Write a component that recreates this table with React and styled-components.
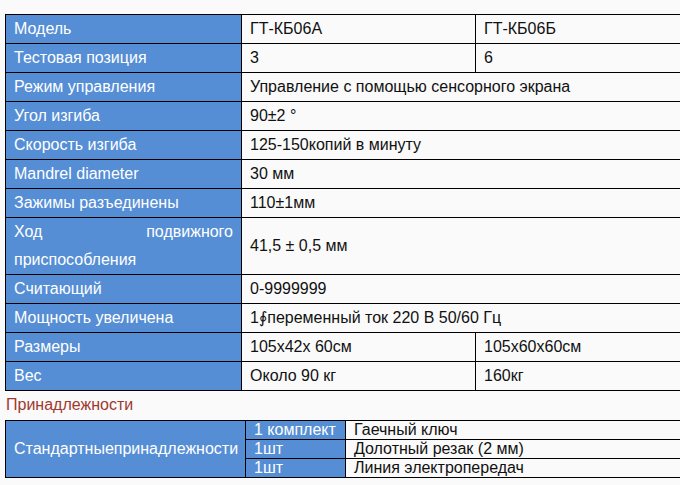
import React from "react"
import styled, { createGlobalStyle } from "styled-components"

const GlobalStyle = createGlobalStyle`
  html, body {
    margin: 0;
    padding: 0;
    background: #fafafa;
  }
  body {
    font-family: "Liberation Sans", Arial, sans-serif;
    font-size: 16px;
    color: #111;
  }
`

const Page = styled.div`
  width: 680px;
  height: 485px;
  overflow: hidden;
  padding: 14px 0 0 5px;
  box-sizing: border-box;
`

const SpecTable = styled.table`
  border-collapse: collapse;
  table-layout: fixed;
  width: 730px;
`

const Cell = styled.td`
  border: 1px solid #000;
  padding: 0 8px;
  line-height: ${p => (p.$compact ? "18px" : "28px")};
  height: ${p => (p.$compact ? "18px" : "28px")};
  white-space: nowrap;
  vertical-align: middle;
  overflow: hidden;
  background: ${p => (p.$head ? "#558ed5" : "#fafafa")};
  color: ${p => (p.$head ? "#fff" : "#111")};
  text-align: ${p => (p.$justify ? "justify" : "left")};
  ${p => p.$justify && "white-space: normal; text-align-last: left;"}
`

const SectionTitle = styled.div`
  color: #a0392f;
  line-height: 20px;
  padding: 4px 0 5px 1px;
`

const Symbol = styled.span`
  font-family: "DejaVu Sans", sans-serif;
  font-style: italic;
  font-size: 16px;
`

const specs = [
  ["Модель", "ГТ-КБ06А", "ГТ-КБ06Б"],
  ["Тестовая позиция", "3", "6"],
  ["Режим управления", "Управление с помощью сенсорного экрана"],
  ["Угол изгиба", "90±2 °"],
  ["Скорость изгиба", "125-150копий в минуту"],
  ["Mandrel diameter", "30 мм"],
  ["Зажимы разъединены", "110±1мм"],
  ["Ход подвижного приспособления", "41,5 ± 0,5 мм", null, true],
  ["Считающий", "0-9999999"],
  ["Мощность увеличена", <>1<Symbol>∮</Symbol>переменный ток 220 В 50/60 Гц</>],
  ["Размеры", "105x42x 60см", "105x60x60см"],
  ["Вес", "Около 90 кг", "160кг"],
]

const accessories = [
  ["1 комплект", "Гаечный ключ"],
  ["1шт", "Долотный резак (2 мм)"],
  ["1шт", "Линия электропередач"],
]

export default function App() {
  return (
    <Page>
      <GlobalStyle />
      <SpecTable>
        <colgroup>
          <col style={{ width: 236 }} />
          <col style={{ width: 234 }} />
          <col style={{ width: 260 }} />
        </colgroup>
        <tbody>
          {specs.map(([label, a, b, justify]) => (
            <tr key={label}>
              <Cell $head $justify={justify}>{label}</Cell>
              {b ? (
                <>
                  <Cell>{a}</Cell>
                  <Cell>{b}</Cell>
                </>
              ) : (
                <Cell colSpan={2}>{a}</Cell>
              )}
            </tr>
          ))}
        </tbody>
      </SpecTable>
      <SectionTitle>Принадлежности</SectionTitle>
      <SpecTable>
        <colgroup>
          <col style={{ width: 240 }} />
          <col style={{ width: 100 }} />
          <col style={{ width: 390 }} />
        </colgroup>
        <tbody>
          {accessories.map(([qty, item], i) => (
            <tr key={item}>
              {i === 0 && (
                <Cell $head rowSpan={3}>Стандартныепринадлежности</Cell>
              )}
              <Cell $head $compact>{qty}</Cell>
              <Cell $compact>{item}</Cell>
            </tr>
          ))}
        </tbody>
      </SpecTable>
    </Page>
  )
}
